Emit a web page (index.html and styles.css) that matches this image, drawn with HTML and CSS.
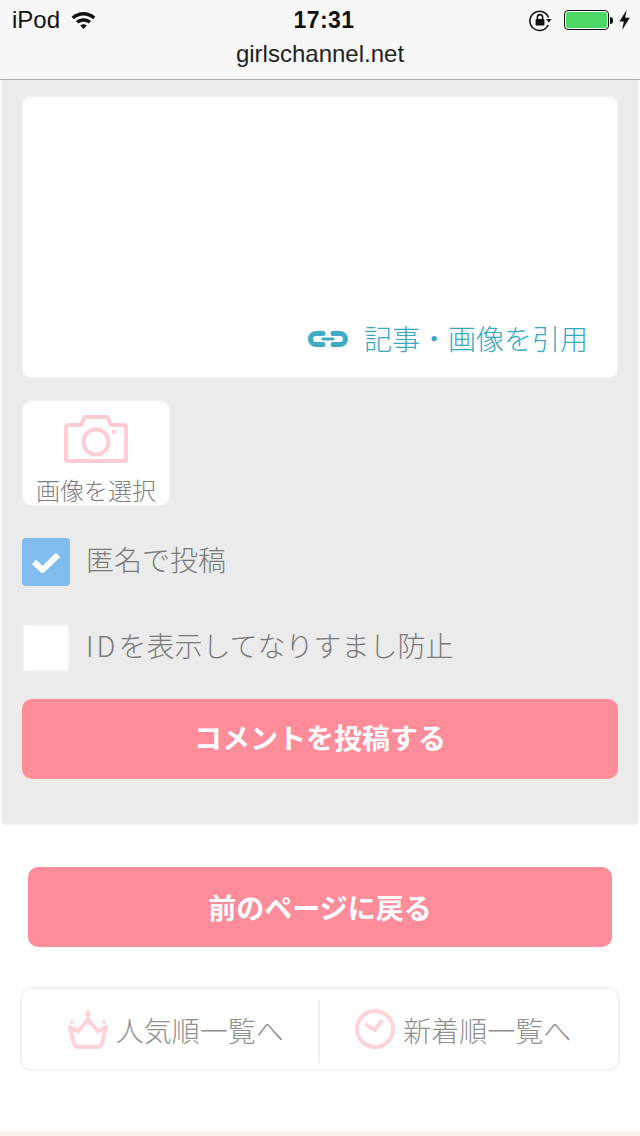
FILE: index.html
```html
<!DOCTYPE html>
<html lang="ja">
	<head>
		<meta charset="UTF-8" />
		<meta name="viewport" content="width=device-width, initial-scale=1.0" />
		<title>girlschannel.net</title>
		<link rel="stylesheet" href="styles.css">
	</head>

	<body>
		<!--iOS status bar and address bar-->
		<header class="top">
			<div class="status">
				<div class="status__left">
					<span>iPod</span>
					<svg class="icon-wifi" viewBox="0 0 26 20" aria-hidden="true">
						<path d="M0.5 6 C8 -0.5 18 -0.5 25.5 6 L23 8.6 C17 3.6 9 3.6 3 8.6 Z" />
						<path d="M5 10.6 C10 6.6 16 6.6 21 10.6 L18.5 13.2 C15 10.6 11 10.6 7.5 13.2 Z" />
						<path d="M9.6 15.2 C11.8 13.6 14.2 13.6 16.4 15.2 L13 19 Z" />
					</svg>
				</div>
				<div class="status__time">17:31</div>
				<div class="status__right">
					<svg class="icon-lock" viewBox="0 0 24 24" aria-hidden="true">
						<path class="icon-lock__ring" d="M20.5 9.5 A9.6 9.6 0 1 0 20.2 17" />
						<path d="M18 11 L23.6 11 L20.8 14.4 Z" />
						<path class="icon-lock__bow" d="M9.4 11 V9.2 A2.6 2.6 0 0 1 14.6 9.2 V11" />
						<rect x="7.6" y="11" width="8.8" height="6.6" rx="1" />
					</svg>
					<div class="battery">
						<div class="battery__fill"></div>
					</div>
					<div class="battery__tip"></div>
					<svg class="icon-bolt" viewBox="0 0 11 20" aria-hidden="true">
						<path d="M7.6 0 L0.4 11.6 H4.8 L3.2 20 L10.8 7.8 H6.2 Z" />
					</svg>
				</div>
			</div>
			<div class="address">girlschannel.net</div>
		</header>

		<main>
			<form class="panel">
				<div class="textbox">
					<a class="quote">
						<svg class="icon-link" viewBox="0 0 40 16" aria-hidden="true">
							<path d="M15 2.5 H8 A5.5 5.5 0 0 0 8 13.5 H15 M25 2.5 H32 A5.5 5.5 0 0 1 32 13.5 H25" />
							<path class="icon-link__bar" d="M15 8 H25" />
						</svg>
						<span class="nudge">記事・画像を引用</span>
					</a>
				</div>

				<div class="photo">
					<svg class="icon-camera" viewBox="0 0 64 48" aria-hidden="true">
						<path class="icon-camera__body" d="M4 10 H17 L20 3.5 Q20.5 2 22 2 H42 Q43.5 2 44 3.5 L47 10 H60 Q62 10 62 12 V44 Q62 46 60 46 H4 Q2 46 2 44 V12 Q2 10 4 10 Z" />
						<circle class="icon-camera__body" cx="32" cy="27" r="12.5" />
						<circle class="icon-camera__dot" cx="50" cy="17" r="2.2" />
					</svg>
					<span class="photo__label">画像を選択</span>
				</div>

				<label class="check check--first">
					<span class="check__box check__box--on">
						<svg viewBox="0 0 28 22" aria-hidden="true">
							<path d="M2 11 L10.5 19 L26 4" />
						</svg>
					</span>
					<span class="nudge">匿名で投稿</span>
				</label>
				<label class="check">
					<span class="check__box"></span>
					<span class="nudge"><span class="check__id">ID</span>を表示してなりすまし防止</span>
				</label>

				<button class="btn btn--post" type="button">コメントを投稿する</button>
			</form>

			<div class="back">
				<button class="btn btn--back" type="button">前のページに戻る</button>
			</div>

			<nav class="switch">
				<a class="switch__item switch__item--left">
					<svg class="icon-crown" viewBox="0 0 40 40" aria-hidden="true">
						<path class="icon-crown__line" d="M2 18 L5.5 33 Q6.5 38 11 38 H29 Q33.5 38 34.5 33 L38 18 L30 22.5 L20 10.5 L10 22.5 Z" />
						<path d="M20 0 L23 5 L20 10 L17 5 Z" />
						<circle cx="4" cy="13" r="1.9" />
						<circle cx="36" cy="13" r="1.9" />
					</svg>
					<span class="nudge">人気順一覧へ</span>
				</a>
				<a class="switch__item switch__item--right">
					<svg class="icon-clock" viewBox="0 0 40 40" aria-hidden="true">
						<circle cx="20" cy="20" r="18" />
						<path d="M11.5 16 L20 21 L26 12.5" />
					</svg>
					<span class="nudge">新着順一覧へ</span>
				</a>
			</nav>
		</main>

		<div class="foot"></div>
	</body>
</html>
```

FILE: styles.css
```css
* {
	box-sizing: border-box;
}
html,
body {
	height: 1136px;
	overflow: hidden;
}
body {
	margin: 0;
	background-color: #fff;
	color: #888;
	font-family: "Noto Sans CJK JP", "Noto Sans", sans-serif;
	font-weight: 300;
}
/*lifts the CJK text a little, its box sits low in the line*/
.nudge {
	padding-bottom: 6px;
}

/*status bar and address bar*/
.top {
	height: 80px;
	background-color: #f7f7f7;
	border-bottom: 1px solid #b2b2b2;
	font-family: "Liberation Sans", Arial, sans-serif;
	font-weight: 400;
	color: #111;
}
.status {
	display: grid;
	grid-template-columns: 1fr auto 1fr;
	align-items: center;
	height: 40px;
	padding: 0 10px 0 12px;
	font-size: 24px;
}
.status__left {
	display: flex;
	align-items: center;
	gap: 11px;
	height: 100%;
}
.status__time {
	margin-left: 6px;
	font-weight: 700;
	font-size: 23px;
	letter-spacing: 0.4px;
}
.status__right {
	display: flex;
	align-items: center;
	justify-content: flex-end;
	height: 100%;
}
.icon-wifi {
	width: 25px;
	height: 19px;
	fill: #111;
}
.icon-lock {
	width: 24px;
	height: 24px;
	margin-right: 12px;
	fill: #111;
}
.icon-lock__ring,
.icon-lock__bow {
	fill: none;
	stroke: #111;
	stroke-width: 1.6;
}
.battery {
	width: 45px;
	height: 20px;
	padding: 1px;
	border: 1px solid #111;
	border-radius: 4px;
}
.battery__fill {
	height: 100%;
	background-color: #4cd964;
	border-radius: 2px;
}
.battery__tip {
	width: 3px;
	height: 7px;
	margin-left: 1px;
	background-color: #111;
	border-radius: 0 3px 3px 0;
}
.icon-bolt {
	width: 11px;
	height: 20px;
	margin-left: 6px;
	fill: #111;
}
.address {
	text-align: center;
	font-size: 24px;
	line-height: 28px;
	color: #222;
}

/*gray form panel*/
.panel {
	display: flex;
	flex-direction: column;
	align-items: flex-start;
	height: 743px;
	margin: 0 2px;
	padding: 16px 20px 0;
	background-color: #ebebeb;
	box-shadow: 0 1px 3px rgba(0, 0, 0, 0.12);
}
.textbox {
	display: flex;
	align-items: flex-end;
	justify-content: flex-end;
	width: 596px;
	height: 282px;
	padding: 0 29px 16px 0;
	background-color: #fff;
	border: 1px solid #f2f2f2;
	border-radius: 8px;
}
.quote {
	display: flex;
	align-items: center;
	gap: 16px;
	font-size: 28px;
	line-height: 42px;
	color: #38a8c0;
}
.quote .nudge {
	padding-bottom: 2px;
}
.icon-link {
	width: 40px;
	height: 16px;
	fill: none;
	stroke: #3dacc4;
	stroke-width: 5;
	stroke-linecap: round;
}
.icon-link__bar {
	stroke-width: 3;
}
.photo {
	display: flex;
	flex-direction: column;
	align-items: center;
	width: 148px;
	height: 106px;
	margin-top: 22px;
	padding-top: 14px;
	background-color: #fff;
	border: 1px solid #f2f2f2;
	border-radius: 10px;
	overflow: hidden;
}
.icon-camera {
	width: 64px;
	height: 48px;
	flex: none;
}
.icon-camera__body {
	fill: none;
	stroke: #ffccd3;
	stroke-width: 4;
}
.icon-camera__dot {
	fill: #ffccd3;
}
.photo__label {
	margin-top: 10px;
	font-size: 24px;
	line-height: 34px;
	color: #7f7f7f;
	white-space: nowrap;
}
.check {
	display: flex;
	align-items: center;
	gap: 16px;
	height: 48px;
	margin-top: 38px;
	font-size: 28px;
	color: #7a7a7a;
}
.check--first {
	margin-top: 32px;
}
.check__id {
	letter-spacing: 3px;
}
.check__box {
	display: flex;
	align-items: center;
	justify-content: center;
	width: 48px;
	height: 48px;
	background-color: #fff;
	border: 2px solid #f2f2f2;
	border-radius: 4px;
}
.check__box--on {
	background-color: #80bcee;
	border: 0;
}
.check__box svg {
	width: 28px;
	height: 22px;
	fill: none;
	stroke: #fff;
	stroke-width: 6;
}
.btn {
	display: block;
	height: 80px;
	padding: 0 0 5px;
	background-color: #ff8c99;
	border: 0;
	border-radius: 10px;
	color: #fff;
	font-family: inherit;
	font-size: 28px;
	font-weight: 700;
}
.btn--post {
	width: 596px;
	margin-top: 27px;
}

/*below the panel*/
.back {
	padding: 44px 28px 0;
}
.btn--back {
	width: 100%;
	padding-bottom: 1px;
}
.switch {
	display: flex;
	align-items: center;
	width: 600px;
	height: 84px;
	margin: 40px 20px 0;
	background-color: #fff;
	border: 2px solid #f2f2f2;
	border-radius: 12px;
}
.switch__item {
	display: flex;
	align-items: center;
	justify-content: center;
	gap: 8px;
	flex: 1;
	height: 64px;
	margin-top: 3px;
	font-size: 28px;
	color: #8f8f8f;
}
.switch__item .nudge {
	padding-bottom: 2px;
}
.switch__item--left {
	padding-left: 10px;
}
.switch__item--right {
	margin-left: -2px;
	padding-right: 11px;
	border-left: 2px solid #f2f2f2;
}
.icon-crown {
	width: 40px;
	height: 40px;
	flex: none;
	margin-bottom: 3px;
	fill: #ffd2d8;
}
.icon-crown__line {
	fill: none;
	stroke: #ffd2d8;
	stroke-width: 4;
	stroke-linejoin: round;
}
.icon-clock {
	width: 40px;
	height: 40px;
	flex: none;
	margin-bottom: 3px;
	fill: none;
	stroke: #ffd2d8;
	stroke-width: 4;
	stroke-linecap: round;
}
.foot {
	height: 5px;
	margin-top: 60px;
	background-color: #fbf1ea;
}
```
